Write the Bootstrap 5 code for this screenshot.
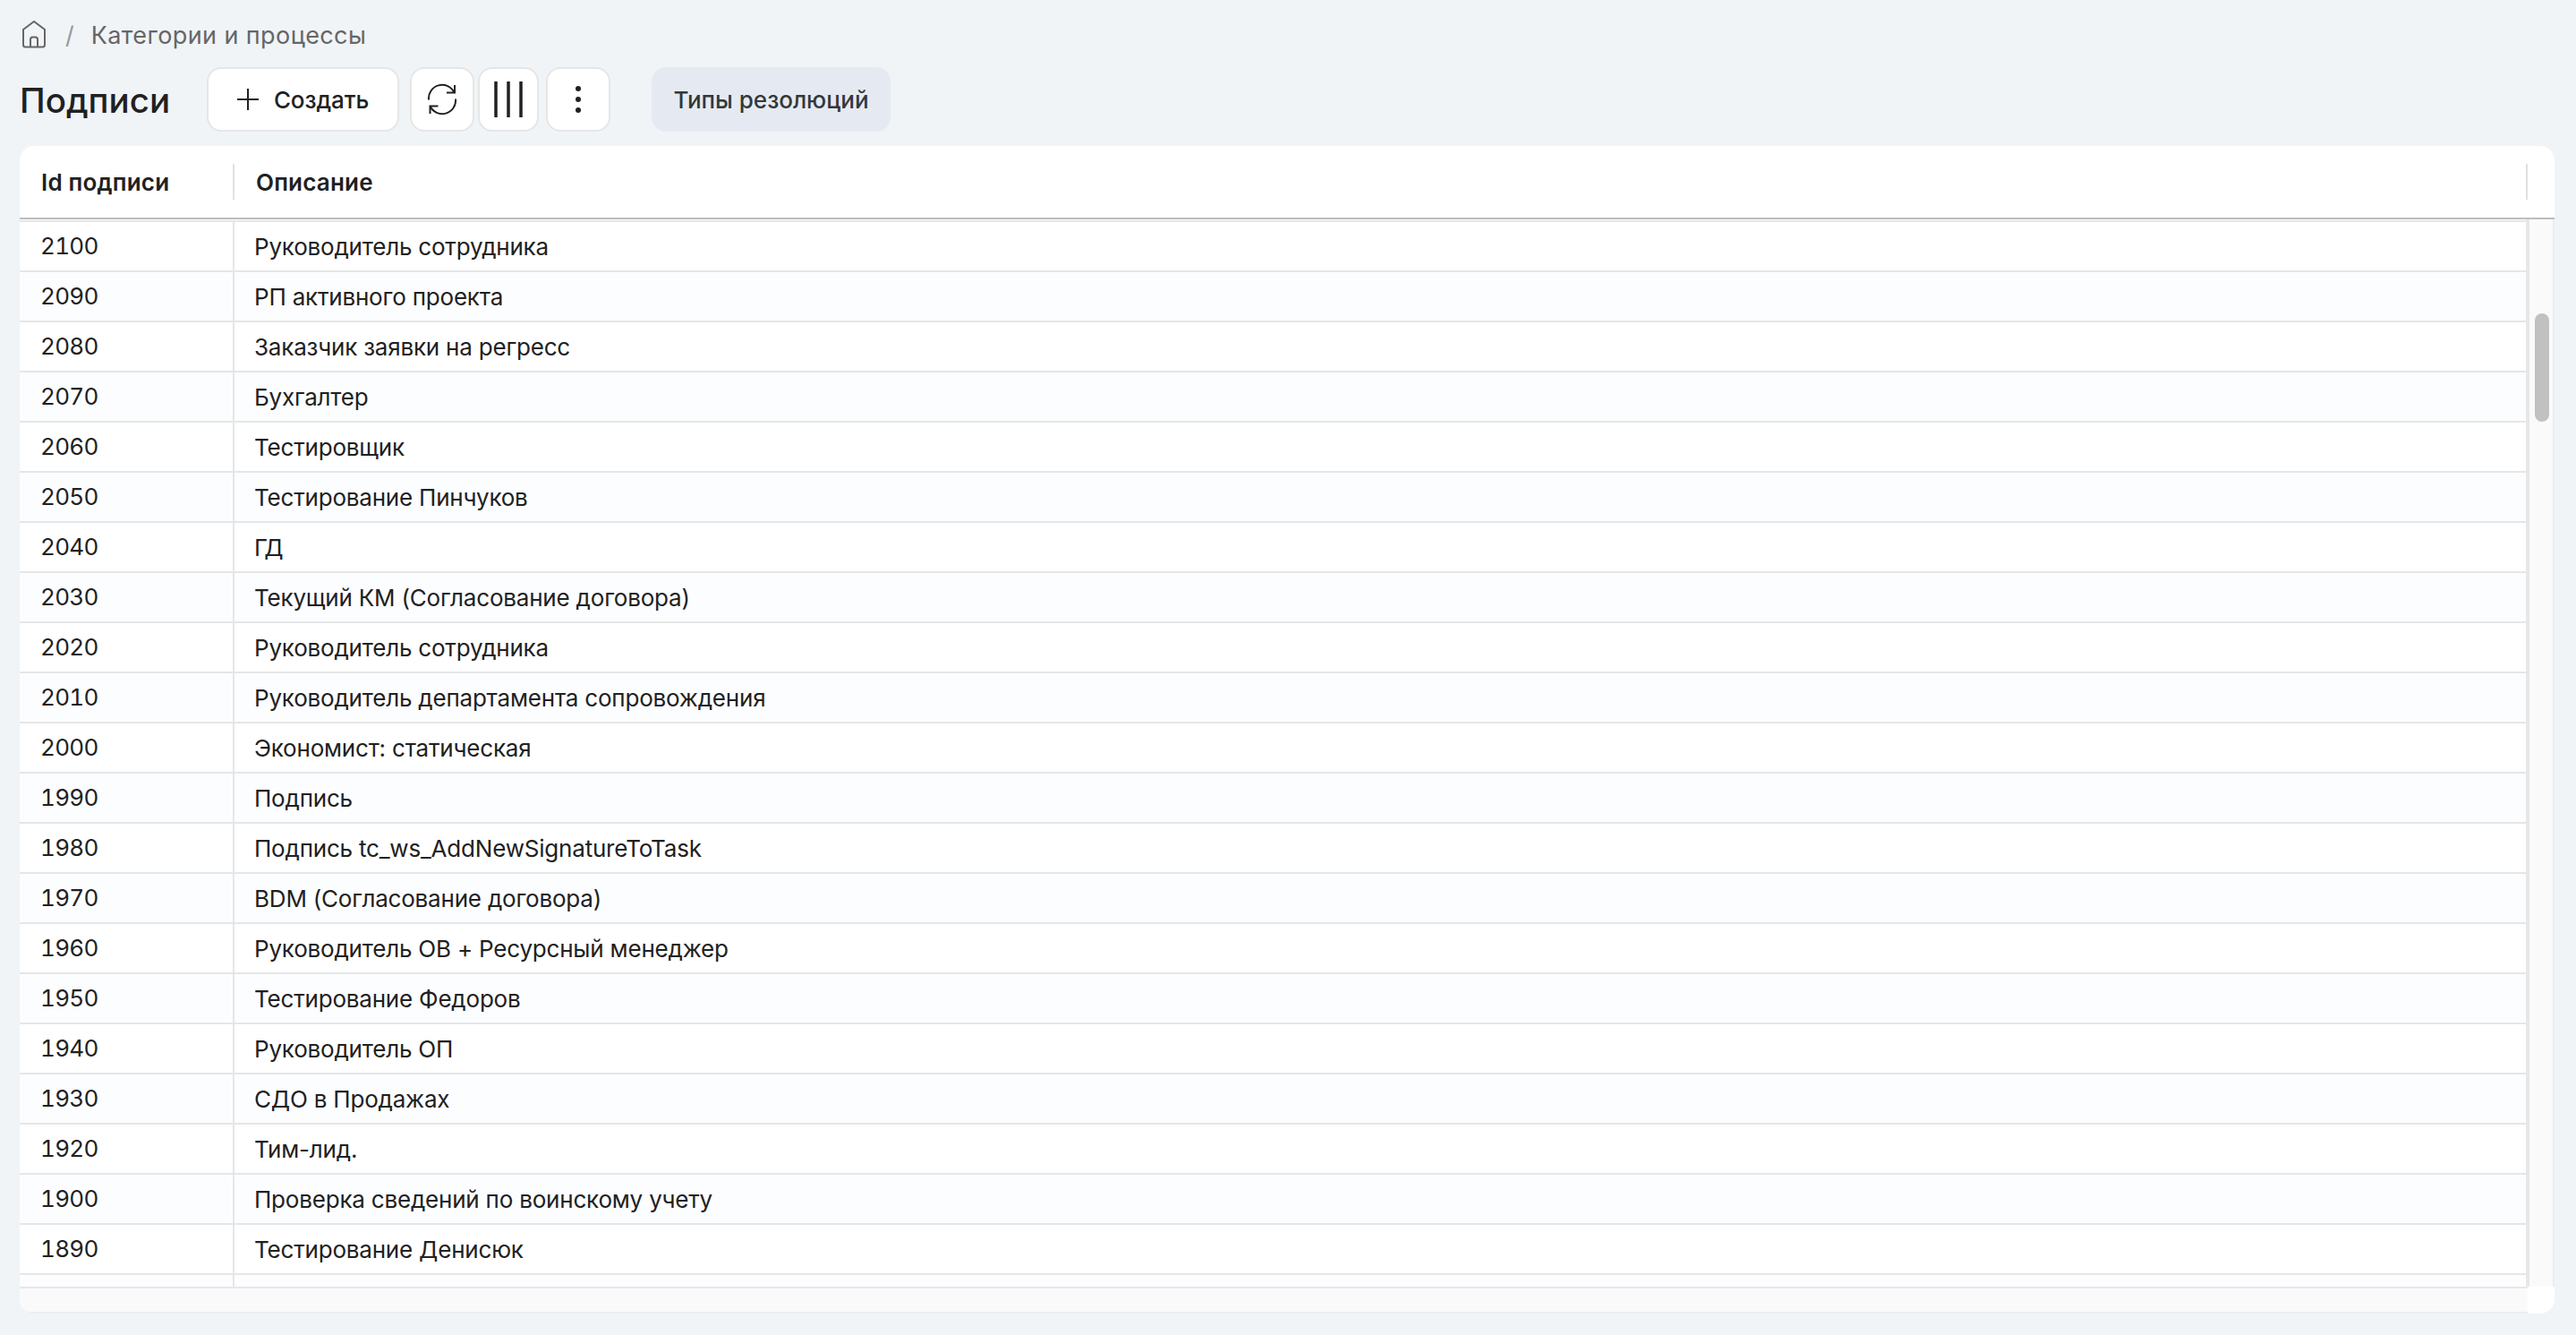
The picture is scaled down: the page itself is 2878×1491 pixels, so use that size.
<!DOCTYPE html>
<html lang="ru">
<head>
    <meta charset="UTF-8">
    <meta name="viewport" content="width=device-width, initial-scale=1.0">
    <title>Подписи</title>
    <link rel="stylesheet" href="https://cdn.jsdelivr.net/npm/bootstrap@5.3.0/dist/css/bootstrap.min.css">
    <style>
    body {
        height: 1491px;
        padding: 0 24px 24px 22px;
        font-family: Inter, "Liberation Sans", sans-serif;
        font-size: 26px;
        color: #212121;
        background-color: #f0f4f7;
    }

    svg {
        display: block;
        fill: none;
        stroke: currentColor;
    }

    /* Breadcrumbs */
    .crumbs {
        height: 75px;
        padding-top: 4px;
        font-size: 27px;
        line-height: 72px;
        color: #666;
    }

    .crumbs .crumb-sep {
        margin: 0 19px 0 19px;
        color: #999;
    }

    .crumbs .crumb-name { letter-spacing: 0.4px; }

    /* Toolbar */
    .toolbar {
        height: 72px;
        margin-bottom: 16px;
    }

    .page-title {
        width: 209px;
        margin: 0;
        padding-top: 1px;
        font-size: 38.5px;
        font-weight: 500;
        line-height: 72px;
    }

    .tool-btn {
        height: 72px;
        padding: 0;
        border: 2px solid #e6e6e6;
        border-radius: 16px;
        background-color: #fff;
        font-size: 26px;
        font-weight: 500;
        color: #212121;
    }

    .btn-create { width: 215px; margin-right: 12px; }
    .btn-create svg { margin-right: 17px; }
    .btn-create span { letter-spacing: -0.1px; }
    .btn-refresh { width: 72px; margin-right: 4px; }
    .btn-columns { width: 68px; margin-right: 8px; }
    .btn-more { width: 72px; margin-right: 46px; }

    .btn-types {
        width: 267px;
        border-color: #e5eaf2;
        background-color: #e5eaf2;
        color: #33383a;
    }

    /* Grid */
    .grid-box {
        height: 1304px;
        border-radius: 16px;
        background-color: #fff;
    }

    .grid-head {
        height: 82px;
        flex: none;
        border-bottom: 2px solid #bdbdbd;
        font-weight: 600;
        line-height: 80px;
    }

    .head-cell {
        padding-left: 24px;
    }

    .head-cell span {
        padding-top: 2px;
        letter-spacing: 0.2px;
    }

    .head-cell::after {
        content: "";
        height: 40px;
        border-right: 2px solid #dde1e5;
    }

    .col-id { width: 240px; flex: none; }
    .head-cell.col-desc { width: 2562px; }

    .grid-rows {
        width: 2800px;
        height: 1192px;
        padding-top: 1px;
    }

    .grid-row {
        height: 56px;
        flex: none;
        border-top: 2px solid #e5e6e7;
        line-height: 56px;
        white-space: nowrap;
    }

    .grid-row:nth-child(even) { background-color: #fcfdff; }

    .grid-row .col-id {
        padding-left: 23px;
        border-right: 2px solid #e5e6e7;
        font-variant-numeric: tabular-nums;
        letter-spacing: -0.7px;
        line-height: 54px;
    }

    .grid-row .col-desc {
        padding-left: 22px;
        letter-spacing: -0.2px;
        line-height: 56px;
    }

    /* Scrollbars */
    .scroll-y {
        width: 32px;
        padding: 105px 4px 0 6px;
        border-left: 4px solid #e7e7e7;
        border-right: 2px solid #ededed;
        background-color: #fafafa;
    }

    .scroll-thumb {
        height: 121px;
        border-radius: 8px;
        background-color: #c1c1c1;
    }

    .scroll-x {
        width: 2802px;
        height: 30px;
        border-top: 2px solid #e7e7e7;
        border-bottom: 2px solid #ededed;
        background-color: #fafafa;
    }
    </style>
</head>
<body>
    <nav class="crumbs d-flex">
        <svg class="mt-3" width="32" height="36" viewBox="0 0 32 36" stroke-width="2">
            <path d="M4 13 16 4l12 9v17a2.500 2.500 0 0 1-2.500 2.500h-19A2.500 2.500 0 0 1 4 30z"/>
            <path d="M12 32v-8a2.500 2.500 0 0 1 2.500-2.500h3A2.500 2.500 0 0 1 20 24v8"/>
        </svg>
        <span class="crumb-sep">/</span>
        <span class="crumb-name">Категории и процессы</span>
    </nav>

    <div class="toolbar d-flex">
        <h1 class="page-title">Подписи</h1>
        <button class="btn tool-btn btn-create d-flex align-items-center justify-content-center">
            <svg width="24" height="24" viewBox="0 0 24 24" stroke-width="2"><path d="M12 0v24M0 12h24"/></svg>
            <span>Создать</span>
        </button>
        <button class="btn tool-btn btn-refresh d-flex align-items-center justify-content-center">
            <svg width="36" height="40" viewBox="0 0 36 40" stroke-width="2">
                <path d="M3 20.500A15 15 0 0 1 31.500 12.500M32 4v8.500h-9M33 19.500A15 15 0 0 1 4.500 27.500M4.500 36v-8.500h9"/>
            </svg>
        </button>
        <button class="btn tool-btn btn-columns d-flex align-items-center justify-content-center">
            <svg width="32" height="40" viewBox="0 0 32 40" stroke-width="3.500"><path d="M2 0v40M16 0v40M30 0v40"/></svg>
        </button>
        <button class="btn tool-btn btn-more d-flex align-items-center justify-content-center">
            <svg width="8" height="32" viewBox="0 0 8 32">
                <g fill="#212121" stroke="none"><circle cx="4" cy="4" r="3"/><circle cx="4" cy="16" r="3"/><circle cx="4" cy="28" r="3"/></g>
            </svg>
        </button>
        <button class="btn tool-btn btn-types">Типы резолюций</button>
    </div>

    <main class="grid-box overflow-hidden">
        <div class="grid-head d-flex">
            <div class="head-cell col-id d-flex align-items-center justify-content-between"><span>Id подписи</span></div>
            <div class="head-cell col-desc d-flex align-items-center justify-content-between"><span>Описание</span></div>
        </div>
        <div class="d-flex">
            <div class="grid-rows d-flex flex-column overflow-hidden" id="gridRows"></div>
            <div class="scroll-y"><div class="scroll-thumb"></div></div>
        </div>
        <div class="scroll-x"></div>
    </main>

    <script>
        const rows = [
            [2100, "Руководитель сотрудника"],
            [2090, "РП активного проекта"],
            [2080, "Заказчик заявки на регресс"],
            [2070, "Бухгалтер"],
            [2060, "Тестировщик"],
            [2050, "Тестирование Пинчуков"],
            [2040, "ГД"],
            [2030, "Текущий КМ (Согласование договора)"],
            [2020, "Руководитель сотрудника"],
            [2010, "Руководитель департамента сопровождения"],
            [2000, "Экономист: статическая"],
            [1990, "Подпись"],
            [1980, "Подпись tc_ws_AddNewSignatureToTask"],
            [1970, "BDM (Согласование договора)"],
            [1960, "Руководитель ОВ + Ресурсный менеджер"],
            [1950, "Тестирование Федоров"],
            [1940, "Руководитель ОП"],
            [1930, "СДО в Продажах"],
            [1920, "Тим-лид."],
            [1900, "Проверка сведений по воинскому учету"],
            [1890, "Тестирование Денисюк"],
            ["", ""]
        ];

        document.getElementById("gridRows").innerHTML = rows.map(([id, name]) =>
            `<div class="grid-row d-flex"><div class="col-id">${id}</div><div class="col-desc">${name}</div></div>`
        ).join("");
    </script>
    <script src="https://cdn.jsdelivr.net/npm/bootstrap@5.3.0/dist/js/bootstrap.bundle.min.js"></script>
</body>
</html>
